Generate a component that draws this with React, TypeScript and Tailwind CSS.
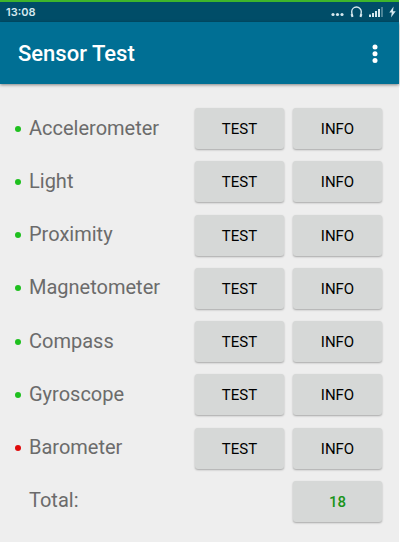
import React from "react";

interface Sensor {
  name: string;
  available: boolean;
}

const sensors: Sensor[] = [
  { name: "Accelerometer", available: true },
  { name: "Light", available: true },
  { name: "Proximity", available: true },
  { name: "Magnetometer", available: true },
  { name: "Compass", available: true },
  { name: "Gyroscope", available: true },
  { name: "Barometer", available: false },
];

function StatusBar() {
  return (
    <div className="flex h-[22px] items-center justify-between border-t-2 border-[#3fb52b] bg-[#004d68] pr-[3px] pl-[6px] text-[#d5e8ee]">
      <span className="font-['Inter',sans-serif] text-[11px] leading-none font-semibold">13:08</span>
      <div className="flex items-center gap-[6px]">
        <svg width="13" height="12" viewBox="0 0 13 12" fill="currentColor" aria-hidden="true">
          <circle cx="2" cy="8.5" r="1.6" />
          <circle cx="6.5" cy="8.5" r="1.6" />
          <circle cx="11" cy="8.5" r="1.6" />
        </svg>
        {/* Headphones */}
        <svg width="13" height="12" viewBox="0 0 13 12" fill="none" stroke="currentColor" aria-hidden="true">
          <path d="M2.8 10C1.9 8.6 1.7 7.3 1.7 5.8a4.8 4.8 0 0 1 9.6 0c0 1.5-.2 2.8-1.1 4.2" strokeWidth="1.4" />
          <path d="M1.5 8.2l1 2.8M11.5 8.2l-1 2.8" strokeWidth="2" />
        </svg>
        {/* Signal strength */}
        <svg width="14" height="12" viewBox="0 0 14 12" fill="currentColor" aria-hidden="true">
          <rect x="0" y="8.5" width="2" height="2.5" />
          <rect x="3" y="7" width="2" height="4" />
          <rect x="6" y="5" width="2" height="6" />
          <rect x="9" y="3" width="2" height="8" />
          <rect x="12" y="1" width="2" height="10" opacity="0.35" />
        </svg>
        {/* Charging */}
        <svg width="7" height="12" viewBox="0 0 7 12" fill="currentColor" aria-hidden="true">
          <path d="M4.6 0.5L0.3 6.6h2.5L2 11.5L6.7 5.2H4Z" />
        </svg>
      </div>
    </div>
  );
}

function AppBar() {
  return (
    <header className="flex h-[62px] items-center justify-between bg-[#006f94] pt-0.5 pr-4 pl-[18px] text-white shadow-[0_1px_3px_rgba(0,0,0,0.45)]">
      <h1 className="text-[22px] leading-6 font-medium">Sensor Test</h1>
      <button type="button" aria-label="More options" className="flex w-4 justify-center">
        <svg width="6" height="20" viewBox="0 0 6 20" fill="currentColor" aria-hidden="true">
          <circle cx="3" cy="3" r="2.5" />
          <circle cx="3" cy="9.7" r="2.5" />
          <circle cx="3" cy="16.4" r="2.5" />
        </svg>
      </button>
    </header>
  );
}

interface RaisedButtonProps {
  label: string;
  description: string;
  className?: string;
}

function RaisedButton({ label, description, className = "text-black" }: RaisedButtonProps) {
  return (
    <button
      type="button"
      aria-label={description}
      className={`h-[41px] w-[89px] shrink-0 rounded-[3px] bg-[#d6d8d7] pt-0.5 text-[15px] leading-none shadow-[0_1px_2px_rgba(0,0,0,0.3)] ${className}`}
    >
      {label}
    </button>
  );
}

function SensorRow({ name, available }: Sensor) {
  return (
    <li className="flex flex-1 items-center">
      <span className={`size-[6px] shrink-0 rounded-full ${available ? "bg-[#1fc01f]" : "bg-[#e00b0b]"}`} />
      <span className="flex-1 pb-0.5 pl-2 text-[20px] leading-6 text-[#6b6b6b]">{name}</span>
      <div className="flex gap-[9px]">
        <RaisedButton label="TEST" description={`TEST ${name}`} />
        <RaisedButton label="INFO" description={`INFO ${name}`} />
      </div>
    </li>
  );
}

export default function App() {
  return (
    <div className="flex min-h-screen flex-col border-r border-white bg-[#eeeeee] font-['Roboto','Inter',sans-serif]">
      <StatusBar />
      <AppBar />
      <main className="flex flex-1 flex-col pt-[18px] pr-[17px] pb-[14px] pl-[15px]">
        <ul className="flex flex-[7] flex-col">
          {sensors.map((sensor) => (
            <SensorRow key={sensor.name} {...sensor} />
          ))}
        </ul>
        <div className="flex flex-1 items-center pl-[14px]">
          <span className="flex-1 pb-0.5 text-[20px] leading-6 text-[#6b6b6b]">Total:</span>
          <RaisedButton label="18" description="18 sensors in total" className="font-medium text-[#1a941a]" />
        </div>
      </main>
    </div>
  );
}
